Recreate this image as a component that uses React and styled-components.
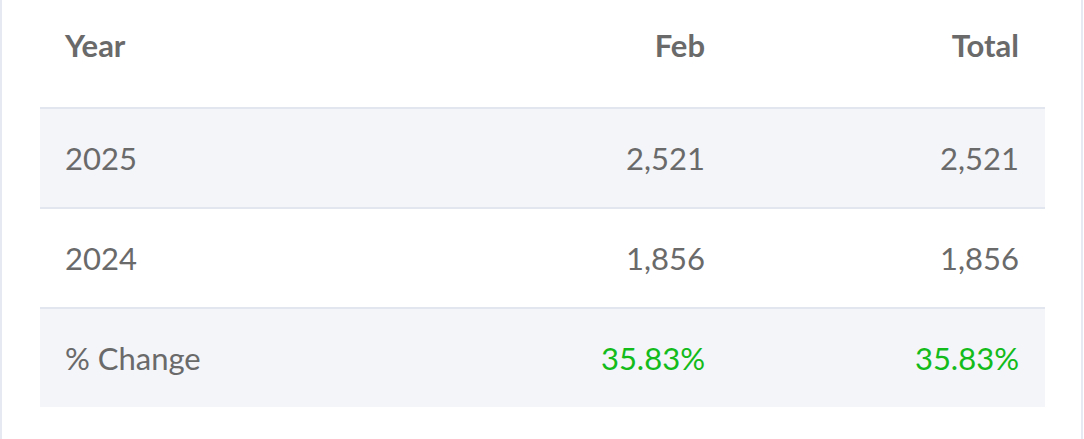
import React from 'react';
import styled, { createGlobalStyle } from 'styled-components';

const GlobalStyle = createGlobalStyle`
  body {
    margin: 0;
    background: #ffffff;
    font-family: Lato, "Open Sans", sans-serif;
  }
`;

const Panel = styled.div`
  box-sizing: border-box;
  width: 1083px;
  min-height: 439px;
  border-left: 2px solid #e6e9f2;
  border-right: 2px solid #e6e9f2;
  padding: 0 36px 0 38px;
  background: #ffffff;
`;

const Table = styled.div`
  display: flex;
  flex-direction: column;
`;

const Row = styled.div`
  display: grid;
  grid-template-columns: 1fr 314px 314px;
  align-items: center;
  box-sizing: border-box;
  height: ${(p) => (p.$header ? '107px' : '100px')};
  padding: ${(p) => (p.$header ? '0 26px 16px 25px' : '0 26px 0 25px')};
  border-top: ${(p) => (p.$header ? 'none' : '2px solid #e1e6ef')};
  background: ${(p) => (p.$shaded ? '#f4f5f9' : '#ffffff')};
`;

const Cell = styled.div`
  font-size: 31px;
  line-height: 1;
  font-weight: ${(p) => (p.$bold ? 700 : 400)};
  color: ${(p) => (p.$good ? '#13bb1b' : '#6a6a6a')};
  text-align: ${(p) => (p.$right ? 'right' : 'left')};
  white-space: nowrap;
`;

const rows = [
  { label: '2025', feb: '2,521', total: '2,521', shaded: true },
  { label: '2024', feb: '1,856', total: '1,856' },
  { label: '% Change', feb: '35.83%', total: '35.83%', shaded: true, good: true },
];

export default function App() {
  return (
    <>
      <GlobalStyle />
      <Panel>
        <Table>
          <Row $header>
            <Cell $bold>Year</Cell>
            <Cell $bold $right>Feb</Cell>
            <Cell $bold $right>Total</Cell>
          </Row>
          {rows.map((r) => (
            <Row key={r.label} $shaded={r.shaded}>
              <Cell>{r.label}</Cell>
              <Cell $right $good={r.good}>{r.feb}</Cell>
              <Cell $right $good={r.good}>{r.total}</Cell>
            </Row>
          ))}
        </Table>
      </Panel>
    </>
  );
}
